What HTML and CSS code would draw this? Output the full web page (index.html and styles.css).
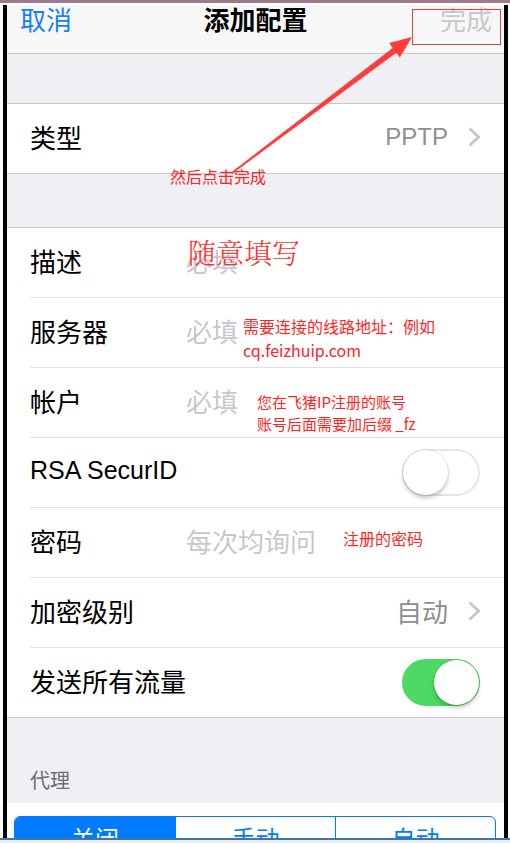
FILE: index.html
```html
<!DOCTYPE html>
<html lang="zh-CN">
<head>
    <meta charset="UTF-8">
    <meta name="viewport" content="width=device-width, initial-scale=1.0">
    <title>添加配置</title>
    <link rel="stylesheet" href="styles.css">
</head>
<body>
    <div class="page">
        <div class="topbar"></div>
        <div class="device">
            <header class="nav">
                <span class="nav-cancel">取消</span>
                <span class="nav-title">添加配置</span>
                <span class="nav-done">完成</span>
            </header>
            <div class="gap gap-top"></div>
            <section class="group">
                <div class="row">
                    <span class="label">类型</span>
                    <span class="value value-latin">PPTP</span>
                    <svg class="chevron" width="12" height="20" viewBox="0 0 12 20"><polyline points="1.5,1.5 10.5,10 1.5,18.5" /></svg>
                </div>
            </section>
            <div class="gap gap-mid"></div>
            <section class="group">
                <div class="row">
                    <span class="label">描述</span>
                    <span class="placeholder">必填</span>
                </div>
                <div class="row">
                    <span class="label">服务器</span>
                    <span class="placeholder">必填</span>
                </div>
                <div class="row">
                    <span class="label">帐户</span>
                    <span class="placeholder">必填</span>
                </div>
                <div class="row">
                    <span class="label label-latin">RSA SecurID</span>
                    <span class="switch"><span class="knob"></span></span>
                </div>
                <div class="row">
                    <span class="label">密码</span>
                    <span class="placeholder">每次均询问</span>
                </div>
                <div class="row">
                    <span class="label">加密级别</span>
                    <span class="value">自动</span>
                    <svg class="chevron" width="12" height="20" viewBox="0 0 12 20"><polyline points="1.5,1.5 10.5,10 1.5,18.5" /></svg>
                </div>
                <div class="row">
                    <span class="label">发送所有流量</span>
                    <span class="switch switch-on"><span class="knob"></span></span>
                </div>
            </section>
            <div class="gap gap-proxy">
                <span class="section-title">代理</span>
            </div>
            <div class="proxy">
                <div class="segmented">
                    <span class="seg seg-active">关闭</span>
                    <span class="seg">手动</span>
                    <span class="seg">自动</span>
                </div>
            </div>
        </div>
        <div class="bottombar"></div>

        <!-- 说明标注 -->
        <svg class="marks" width="510" height="843" viewBox="0 0 510 843">
            <rect x="412.5" y="9.5" width="88" height="35" />
            <polygon points="231,172.6 392.7,47.9 389.1,43.1 412,37 399.9,57.5 396.3,52.7 232,173.9" />
        </svg>
        <div class="note note-done">然后点击完成</div>
        <div class="note note-desc">随意填写</div>
        <div class="note note-server">需要连接的线路地址：例如<br>cq.feizhuip.com</div>
        <div class="note note-account">您在飞猪IP注册的账号<br>账号后面需要加后缀 _fz</div>
        <div class="note note-pass">注册的密码</div>
    </div>
</body>
</html>
```

FILE: styles.css
```css
body {
    margin: 0;
    background: #ffffff;
    font-family: "Liberation Sans", "Noto Sans CJK SC", sans-serif;
}
.page {
    position: relative;
    width: 510px;
    height: 843px;
    overflow: hidden;
}
.topbar {
    height: 3px;
    background: #9d7b8d;
}
.device {
    margin: 2px 2px 0 3px;
    height: 833px;
    border-left: 4px solid #000;
    border-right: 4px solid #000;
    background: #efeff4;
    overflow: hidden;
}
.bottombar {
    height: 2px;
    background: #3a78a6;
    border-bottom: 3px solid #eeeeee;
}

/* Navigation */
.nav {
    display: grid;
    grid-template-columns: 1fr auto 1fr;
    height: 48px;
    background: #f7f7f8;
    border-bottom: 1px solid #c8c7cc;
    font-size: 26px;
    line-height: 32px;
}
.nav-cancel {
    padding-left: 13px;
    color: #157efb;
}
.nav-title {
    font-weight: 700;
    color: #000;
}
.nav-done {
    text-align: right;
    padding-right: 12px;
    color: #c7c7cc;
}

.gap-top {
    height: 49px;
}
.gap-mid {
    height: 53px;
}
.gap-proxy {
    height: 85px;
    display: flex;
    align-items: flex-end;
    padding-left: 23px;
    box-sizing: border-box;
    padding-bottom: 12px;
}
.section-title {
    font-size: 20px;
    line-height: 20px;
    color: #6d6d72;
}

/* Table groups */
.group {
    background: #fff;
    border-top: 1px solid #c8c7cc;
    border-bottom: 1px solid #c8c7cc;
    padding-left: 23px;
}
.row {
    display: flex;
    align-items: center;
    height: 65px;
    padding: 0 24px 4px 0;
    font-size: 26px;
    color: #000;
}
.row + .row {
    border-top: 1px solid #e0e0e4;
}
.label {
    width: 156px;
    flex-shrink: 0;
}
.label-latin {
    font-size: 25px;
    width: auto;
}
.placeholder {
    color: #c7c7cd;
}
.value {
    margin-left: auto;
    color: #8e8e93;
}
.value-latin {
    font-size: 24px;
}
.chevron {
    margin-left: 20px;
    fill: none;
    stroke: #c7c7cc;
    stroke-width: 3;
}

/* Switches */
.switch {
    margin-left: auto;
    margin-top: 4px;
    position: relative;
    width: 78px;
    height: 47px;
    box-sizing: border-box;
    border: 2px solid #e5e5ea;
    border-radius: 24px;
    background: #fff;
}
.knob {
    position: absolute;
    top: -1px;
    left: -1px;
    width: 45px;
    height: 45px;
    border-radius: 50%;
    background: #fff;
    box-shadow: 0 3px 4px rgba(0, 0, 0, 0.22), 0 0 0 1px rgba(0, 0, 0, 0.06);
}
.switch-on {
    background: #4cd964;
    border-color: #4cd964;
}
.switch-on .knob {
    left: auto;
    right: -1px;
}

/* Proxy segmented control */
.proxy {
    background: #fff;
    padding: 13px 8px 0 7px;
}
.segmented {
    display: grid;
    grid-template-columns: 1fr 1fr 1fr;
    height: 46px;
    border: 1px solid #007aff;
    border-radius: 6px;
    overflow: hidden;
}
.seg {
    text-align: center;
    font-size: 24px;
    line-height: 46px;
    color: #007aff;
}
.seg + .seg {
    border-left: 1px solid #007aff;
}
.seg-active {
    background: #007aff;
    color: #fff;
}

/* Annotations */
.marks {
    position: absolute;
    top: 0;
    left: 0;
    pointer-events: none;
}
.marks rect {
    fill: none;
    stroke: #e94040;
    stroke-width: 1;
}
.marks polygon {
    fill: #ff3b3b;
}
.note {
    position: absolute;
    color: #ff2424;
    font-family: "Noto Sans CJK SC", sans-serif;
    font-size: 16px;
    line-height: 16px;
    white-space: nowrap;
}
.note-done {
    left: 170px;
    top: 168px;
}
.note-desc {
    left: 188px;
    top: 236px;
    font-family: "Noto Serif CJK SC", "Noto Sans CJK SC", serif;
    font-size: 28px;
    line-height: 32px;
    font-weight: 300;
    color: #ff3030;
}
.note-server {
    left: 243px;
    top: 314px;
    line-height: 24px;
}
.note-account {
    left: 257px;
    top: 391px;
    font-size: 15px;
    line-height: 22px;
}
.note-pass {
    left: 343px;
    top: 530px;
}
```
